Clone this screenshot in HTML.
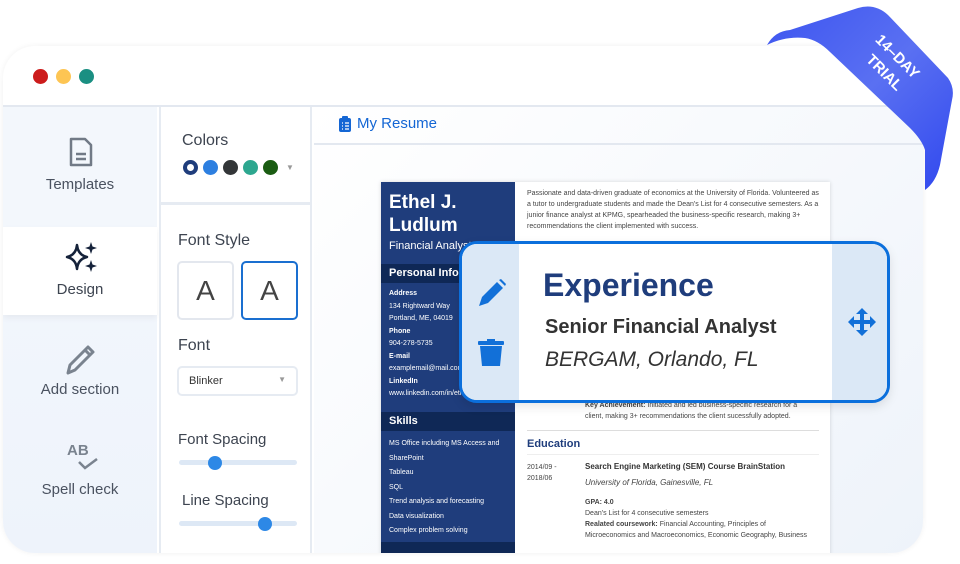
<!DOCTYPE html>
<html><head><meta charset="utf-8"><style>
*{box-sizing:border-box;margin:0;padding:0}
body{width:960px;height:564px;background:#fff;font-family:"Liberation Sans",sans-serif;position:relative;overflow:hidden}
.card{position:absolute;left:3px;top:46px;width:920px;height:507px;border-radius:32px;background:#fff;box-shadow:0 0 6px rgba(0,0,0,.06);overflow:hidden}
.dot{position:absolute;top:23px;width:15px;height:15px;border-radius:50%}
.hdr{position:absolute;left:0;top:59px;width:920px;height:2px;background:#e3e8f0}
.side{position:absolute;left:0;top:61px;width:154px;height:446px;background:linear-gradient(#f4f8fd,#eef3fb)}
.side .it{position:absolute;left:0;width:154px;text-align:center;color:#4a5260;font-size:15px}
.panel{position:absolute;left:156px;top:61px;width:153px;height:446px;background:#fff;border-left:2px solid #e6ebf2;border-right:2px solid #e6ebf2}
.main{position:absolute;left:311px;top:61px;width:609px;height:446px;background:linear-gradient(135deg,#fff,#eef3fa)}
.lbl{position:absolute;color:#3d4450;font-size:16px}
.res{position:absolute;left:378px;top:136px;width:449px;height:380px;background:#fff;box-shadow:0 0 4px rgba(0,0,0,.15)}
.lc{position:absolute;left:0;top:0;width:134px;height:380px;background:#1f3d7c;color:#fff}
.sm{font-size:7px;line-height:14px;color:#444}
</style></head><body>
<div class="card">
 <div class="dot" style="left:30px;background:#cc1c1c"></div>
 <div class="dot" style="left:53px;background:#fdc553"></div>
 <div class="dot" style="left:76px;background:#1a8f82"></div>
 <div class="hdr"></div>
 <div class="side">
  <div class="it" style="top:0;height:120px;background:#f3f7fc"></div>
  <svg style="position:absolute;left:66px;top:30px" width="24" height="30" viewBox="0 0 24 30"><path d="M2 2h14l6 6v20H2z" fill="none" stroke="#717a86" stroke-width="2.5" stroke-linejoin="round"/><path d="M7 17h10M7 22h10" stroke="#717a86" stroke-width="2.5"/></svg>
  <div class="it" style="top:69px">Templates</div>
  <div style="position:absolute;left:0;top:120px;width:154px;height:88px;background:#fff;box-shadow:0 3px 6px rgba(0,0,0,.05)"></div>
  <svg style="position:absolute;left:62px;top:134px" width="34" height="32" viewBox="0 0 34 32"><path d="M12 4Q13 14 22 16Q13 18 12 28Q11 18 2 16Q11 14 12 4Z" fill="none" stroke="#15223a" stroke-width="2.5" stroke-linejoin="round"/><path d="M26 1l1.5 4.5L32 7l-4.5 1.5L26 13l-1.5-4.5L20 7l4.5-1.5z M26 19l1.5 4.5L32 25l-4.5 1.5L26 31l-1.5-4.5L20 25l4.5-1.5z" fill="#15223a"/></svg>
  <div class="it" style="top:174px;color:#3d4450">Design</div>
  <svg style="position:absolute;left:61px;top:235px" width="34" height="34" viewBox="0 0 34 34"><path d="M4 31l2-8L24 5l5 5L11 28z" fill="none" stroke="#7a838f" stroke-width="3" stroke-linejoin="round"/><path d="M21 8l5 5" stroke="#7a838f" stroke-width="3"/></svg>
  <div class="it" style="top:274px">Add section</div>
  <div style="position:absolute;left:64px;top:335px;font-weight:bold;font-size:15px;color:#7a838f">AB</div>
  <svg style="position:absolute;left:74px;top:350px" width="22" height="14"><path d="M2 5l6 6 12-9" fill="none" stroke="#7a838f" stroke-width="2.5"/></svg>
  <div class="it" style="top:374px">Spell check</div>
 </div>
 <div class="panel">
  <div class="lbl" style="left:21px;top:25px">Colors</div>
  <div style="position:absolute;left:22px;top:53px;width:15px;height:15px;border-radius:50%;border:4px solid #1f3d7c"></div>
  <div style="position:absolute;left:42px;top:53px;width:15px;height:15px;border-radius:50%;background:#2d7fe0"></div>
  <div style="position:absolute;left:62px;top:53px;width:15px;height:15px;border-radius:50%;background:#333638"></div>
  <div style="position:absolute;left:82px;top:53px;width:15px;height:15px;border-radius:50%;background:#2da78f"></div>
  <div style="position:absolute;left:102px;top:53px;width:15px;height:15px;border-radius:50%;background:#1a5c12"></div>
  <div style="position:absolute;left:125px;top:56px;font-size:8px;color:#999">▼</div>
  <div style="position:absolute;left:0;top:95px;width:150px;height:3px;background:#e6ebf2"></div>
  <div class="lbl" style="left:17px;top:125px">Font Style</div>
  <div style="position:absolute;left:16px;top:154px;width:57px;height:59px;border:2px solid #e3e7ee;border-radius:5px;text-align:center;font-size:28px;line-height:56px;color:#444">A</div>
  <div style="position:absolute;left:80px;top:154px;width:57px;height:59px;border:2px solid #1a6fd0;border-radius:5px;text-align:center;font-size:28px;line-height:56px;color:#444">A</div>
  <div class="lbl" style="left:17px;top:230px">Font</div>
  <div style="position:absolute;left:16px;top:259px;width:121px;height:30px;border:2px solid #e6ebf2;border-radius:5px;font-size:11px;color:#333;padding:7px 10px">Blinker<span style="float:right;font-size:8px;color:#999">▼</span></div>
  <div class="lbl" style="left:17px;top:324px;font-size:15px">Font Spacing</div>
  <div style="position:absolute;left:18px;top:353px;width:118px;height:5px;border-radius:3px;background:#dde8f5"></div>
  <div style="position:absolute;left:47px;top:349px;width:14px;height:14px;border-radius:50%;background:#2d88e6"></div>
  <div class="lbl" style="left:21px;top:385px;font-size:15px">Line Spacing</div>
  <div style="position:absolute;left:18px;top:414px;width:118px;height:5px;border-radius:3px;background:#dde8f5"></div>
  <div style="position:absolute;left:97px;top:410px;width:14px;height:14px;border-radius:50%;background:#2d88e6"></div>
 </div>
 <div class="main">
  <div style="position:absolute;left:0;top:36px;width:609px;height:2px;background:#e3e8f0"></div>
  <svg style="position:absolute;left:25px;top:9px" width="12" height="16" viewBox="0 0 12 16"><rect x="0" y="2" width="12" height="14" rx="2" fill="#1466d4"/><rect x="3" y="0" width="6" height="4" rx="1" fill="#1466d4"/><path d="M3 7h1M6 7h4M3 10h1M6 10h4M3 13h1M6 13h4" stroke="#fff" stroke-width="1.3"/></svg>
  <div style="position:absolute;left:43px;top:8px;font-size:15px;color:#1466d4">My Resume</div>
 </div>
 <div class="res">
  <div class="lc">
   <div style="position:absolute;left:8px;top:9px;font-size:19px;font-weight:bold;line-height:23px">Ethel J.<br>Ludlum</div>
   <div style="position:absolute;left:8px;top:58px;font-size:11px">Financial Analyst</div>
   <div style="position:absolute;left:0;top:82px;width:134px;height:19px;background:#0f2856;font-size:11px;font-weight:bold;padding:3px 8px">Personal Info</div>
   <div style="position:absolute;left:8px;top:106px;font-size:7px;line-height:12.5px">
    <b>Address</b><br>134 Rightward Way<br>Portland, ME, 04019<br><b>Phone</b><br>904-278-5735<br><b>E-mail</b><br>examplemail@mail.com<br><b>LinkedIn</b><br>www.linkedin.com/in/ethelj</div>
   <div style="position:absolute;left:0;top:230px;width:134px;height:19px;background:#0f2856;font-size:11px;font-weight:bold;padding:3px 8px">Skills</div>
   <div style="position:absolute;left:8px;top:255px;font-size:7px;line-height:14.5px">MS Office including MS Access and<br>SharePoint<br>Tableau<br>SQL<br>Trend analysis and forecasting<br>Data visualization<br>Complex problem solving</div>
   <div style="position:absolute;left:0;top:360px;width:134px;height:20px;background:#0f2856"></div>
  </div>
  <div class="sm" style="position:absolute;left:146px;top:6px;width:296px;line-height:11px">Passionate and data-driven graduate of economics at the University of Florida. Volunteered as a tutor to undergraduate students and made the Dean's List for 4 consecutive semesters. As a junior finance analyst at KPMG, spearheaded the business-specific research, making 3+ recommendations the client implemented with success.</div>
  <div class="sm" style="position:absolute;left:204px;top:218px;line-height:11px"><b>Key Achievement:</b> Initiated and led business-specific research for a<br>client, making 3+ recommendations the client sucessfully adopted.</div>
  <div style="position:absolute;left:146px;top:248px;width:292px;height:1px;background:#ddd"></div>
  <div style="position:absolute;left:146px;top:256px;font-size:11px;font-weight:bold;color:#1f3d7c">Education</div>
  <div style="position:absolute;left:146px;top:272px;width:292px;height:1px;background:#eee"></div>
  <div class="sm" style="position:absolute;left:146px;top:280px;line-height:11px">2014/09 -<br>2018/06</div>
  <div style="position:absolute;left:204px;top:280px;font-size:8px;font-weight:bold;color:#333">Search Engine Marketing (SEM) Course BrainStation</div>
  <div style="position:absolute;left:204px;top:296px;font-size:8px;font-style:italic;color:#444">University of Florida, Gainesville, FL</div>
  <div class="sm" style="position:absolute;left:204px;top:315px;line-height:11px"><b>GPA: 4.0</b><br>Dean's List for 4 consecutive semesters<br><b>Realated coursework:</b> Financial Accounting, Principles of<br>Microeconomics and Macroeconomics, Economic Geography, Business</div>
 </div>
</div>
<div style="position:absolute;left:459px;top:241px;width:431px;height:162px;border:3px solid #0b6fdc;border-radius:18px;overflow:hidden;background:#fff;box-shadow:0 4px 10px rgba(0,0,0,.1)">
 <div style="position:absolute;left:0;top:0;width:57px;height:160px;background:#dbe8f6"></div>
 <div style="position:absolute;right:0;top:0;width:55px;height:160px;background:#dbe8f6"></div>
 <svg style="position:absolute;left:15px;top:34px" width="30" height="30" viewBox="0 0 30 30"><path d="M2 28l3-9L20 4l6 6L11 25z" fill="#1270d8"/><path d="M22 2l2-1 5 5-1 2z" fill="#1270d8"/></svg>
 <svg style="position:absolute;left:16px;top:95px" width="26" height="28" viewBox="0 0 26 28"><rect x="0" y="2" width="26" height="4" rx="1" fill="#1270d8"/><rect x="9" y="0" width="8" height="3" fill="#1270d8"/><path d="M2 7h22l-2 20H4z" fill="#1270d8"/></svg>
 <div style="position:absolute;left:81px;top:23px;font-size:32px;font-weight:bold;color:#1f3d7c">Experience</div>
 <div style="position:absolute;left:83px;top:72px;font-size:20px;font-weight:bold;color:#333">Senior Financial Analyst</div>
 <div style="position:absolute;left:83px;top:104px;font-size:21px;font-style:italic;color:#333">BERGAM, Orlando, FL</div>
 <svg style="position:absolute;left:385px;top:63px" width="30" height="30" viewBox="0 0 30 30"><path d="M15 1l6 6h-4v6h6V9l6 6-6 6v-4h-6v6h4l-6 6-6-6h4v-6H7v4l-6-6 6-6v4h6V7H9z" fill="#1270d8"/></svg>
</div>
<svg style="position:absolute;left:760px;top:0" width="200" height="200" viewBox="0 0 200 200"><defs><linearGradient id="g" x1="0" y1="0" x2="1" y2="1"><stop offset="0" stop-color="#3d55f0"/><stop offset=".5" stop-color="#5a70f2"/><stop offset="1" stop-color="#3048ee"/></linearGradient></defs>
<path d="M7 45Q15 31 30 30L98 8Q115 3 128 15L188 78Q195 88 192 100L180 165Q176 182 165 190L165 150Q162 140 150 128L70 52Q58 40 45 38Q25 36 7 45Z" fill="url(#g)"/>
<text x="0" y="0" transform="translate(134,60) rotate(45)" fill="#fff" font-size="15" font-family="Liberation Sans" font-weight="bold" text-anchor="middle">14–DAY</text>
<text x="0" y="0" transform="translate(121,76) rotate(45)" fill="#fff" font-size="15" font-family="Liberation Sans" font-weight="bold" text-anchor="middle">TRIAL</text></svg>
</body></html>
